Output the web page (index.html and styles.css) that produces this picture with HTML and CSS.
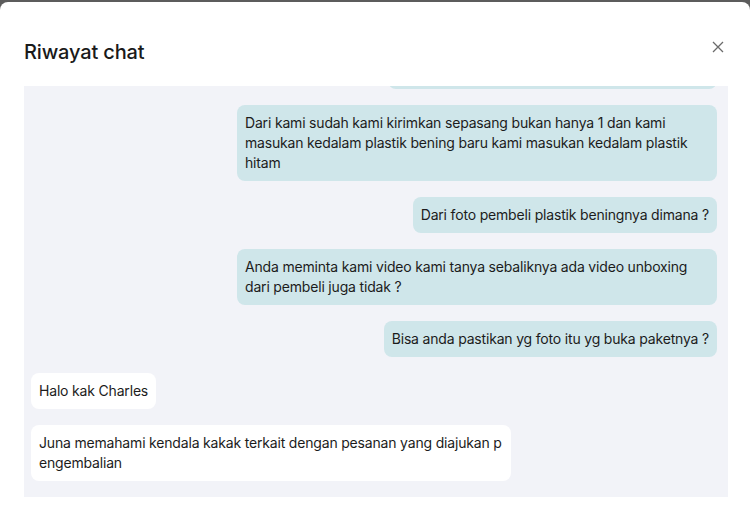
FILE: index.html
```html
<!DOCTYPE html>
<html lang="id">
<head>
  <meta charset="UTF-8">
  <title>Riwayat chat</title>
  <link rel="stylesheet" href="styles.css">
</head>
<body>

  <div class="modal">
    <div class="modal-head">
      <h2>Riwayat chat</h2>
      <button class="close" aria-label="Tutup">
        <svg width="12" height="12" viewBox="0 0 12 12">
          <path d="M1 1 L11 11 M11 1 L1 11" stroke="#6b6b6b" stroke-width="1.3" fill="none"/>
        </svg>
      </button>
    </div>

    <!-- riwayat pesan, discroll ke bawah -->
    <div class="chat">
      <div class="msg me">Kami sudah cek ulang paket sebelum dikirim kak</div>
      <div class="msg me">Dari kami sudah kami kirimkan sepasang bukan hanya 1 dan kami masukan kedalam plastik bening baru kami masukan kedalam plastik hitam</div>
      <div class="msg me">Dari foto pembeli plastik beningnya dimana ?</div>
      <div class="msg me">Anda meminta kami video kami tanya sebaliknya ada video unboxing dari pembeli juga tidak ?</div>
      <div class="msg me">Bisa anda pastikan yg foto itu yg buka paketnya ?</div>
      <div class="msg them">Halo kak Charles</div>
      <div class="msg them">Juna memahami kendala kakak terkait dengan pesanan yang diajukan pengembalian</div>
    </div>
  </div>

</body>
</html>
```

FILE: styles.css
```css
body {
  margin: 0;
  background: #5c5c5c;
  font-family: Inter, 'Noto Sans', sans-serif;
  color: #1c1c1c;
  overflow: hidden;
}
.modal {
  margin-top: 2px;
  height: 530px;
  background: white;
  border-radius: 8px 8px 0 0;
}
.modal-head {
  display: flex;
  justify-content: space-between;
  align-items: flex-start;
  padding: 36px 24px 20px 24px;
}
h2 {
  margin: 0;
  font-size: 20px;
  line-height: 28px;
  font-weight: 500;
  letter-spacing: -0.15px;
  color: #1a1a1a;
}
.close {
  width: 16px;
  height: 16px;
  margin-top: 1px;
  padding: 0;
  border: 0;
  background: none;
  display: flex;
  align-items: center;
  justify-content: center;
  cursor: pointer;
}
.chat {
  margin: 0 22px 0 24px;
  height: 395px;
  padding: 0 11px 16px 7px;
  background: #f2f3f8;
  display: flex;
  flex-direction: column;
  justify-content: flex-end;
  gap: 16px;
  overflow: hidden;
}
.msg {
  max-width: 464px;
  padding: 8px;
  font-size: 14px;
  line-height: 20px;
  letter-spacing: -0.18px;
  border-radius: 8px;
}
.me {
  align-self: flex-end;
  background: #cfe6ea;
}
.them {
  align-self: flex-start;
  background: white;
  word-break: break-all;
}
```
